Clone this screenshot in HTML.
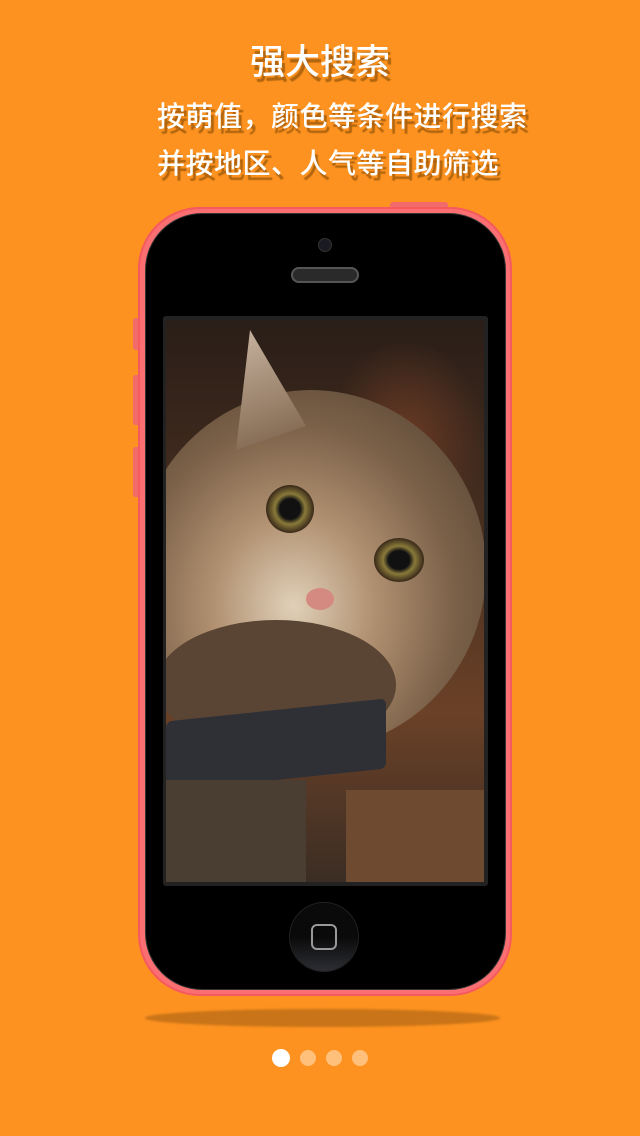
<!DOCTYPE html>
<html><head><meta charset="utf-8"><style>
*{margin:0;padding:0}
body{width:640px;height:1136px;background:#fd9220;position:relative;overflow:hidden;font-family:"Liberation Sans","Noto Sans CJK SC",sans-serif;color:#fff}
.t{position:absolute;white-space:nowrap;font-weight:500;text-shadow:3px 5px 1px rgba(150,85,10,.75)}
.abs{position:absolute}
</style></head><body>
<div class="t" style="left:0;width:640px;text-align:center;top:34px;font-size:35px;">强大搜索</div>
<div class="t" style="left:157px;top:95px;font-size:28px;letter-spacing:0.5px">按萌值，颜色等条件进行搜索</div>
<div class="t" style="left:157px;top:142px;font-size:28px;letter-spacing:0.5px">并按地区、人气等自助筛选</div>

<div class="abs" style="left:145px;top:1009px;width:355px;height:18px;border-radius:50%;background:#c97418;filter:blur(1px)"></div>
<div class="abs" style="left:390px;top:202px;width:58px;height:8px;border-radius:3px;background:#f26a6a"></div>
<div class="abs" style="left:133px;top:318px;width:8px;height:32px;border-radius:3px;background:#f26a6a"></div>
<div class="abs" style="left:133px;top:375px;width:8px;height:50px;border-radius:3px;background:#f26a6a"></div>
<div class="abs" style="left:133px;top:447px;width:8px;height:50px;border-radius:3px;background:#f26a6a"></div>
<div class="abs" style="left:138px;top:207px;width:374px;height:789px;border-radius:62px;background:#fb6f72;box-shadow:inset 0 0 0 2px #f55a5e"></div>
<div class="abs" style="left:146px;top:214px;width:359px;height:775px;border-radius:56px;background:#000;box-shadow:0 0 0 1px #333"></div>
<div class="abs" style="left:319px;top:239px;width:12px;height:12px;border-radius:50%;background:#1a1a22;box-shadow:0 0 0 1px #333"></div>
<div class="abs" style="left:291px;top:267px;width:68px;height:16px;border-radius:8px;background:#2a2a2a;box-shadow:inset 0 0 0 2px #555"></div>
<div class="abs" style="left:163px;top:316px;width:325px;height:570px;background:#222;border-radius:3px"></div>
<div class="abs" style="left:166px;top:320px;width:318px;height:562px;overflow:hidden;background:linear-gradient(180deg,#2a1e18 0%,#4a3020 40%,#6b4127 70%,#3b2d24 100%)">
 <div class="abs" style="left:160px;top:20px;width:160px;height:200px;background:radial-gradient(#6a3a24,transparent 70%)"></div>
 <div class="abs" style="left:-30px;top:70px;width:350px;height:360px;border-radius:50%;background:radial-gradient(ellipse at 45% 60%,#e0d0b8 0%,#b09070 30%,#7a6048 60%,#4a3a2c 100%)"></div>
 <div class="abs" style="left:70px;top:10px;width:70px;height:120px;background:linear-gradient(160deg,#c8b4a0,#7b6048);clip-path:polygon(20% 0,100% 80%,0 100%)"></div>
 <div class="abs" style="left:-10px;top:300px;width:240px;height:130px;border-radius:50%;background:#5a4434"></div>
 <div class="abs" style="left:100px;top:165px;width:48px;height:48px;border-radius:50%;background:radial-gradient(#111 30%,#8a7a3a 45%,#3a2a1a 70%)"></div>
 <div class="abs" style="left:208px;top:218px;width:50px;height:44px;border-radius:50%;background:radial-gradient(#111 30%,#8a7a3a 45%,#3a2a1a 70%)"></div>
 <div class="abs" style="left:140px;top:268px;width:28px;height:22px;border-radius:50%;background:#d48a80"></div>
 <div class="abs" style="left:0;top:390px;width:220px;height:70px;background:#2e3036;transform:skewY(-6deg);border-radius:6px"></div>
 <div class="abs" style="left:0;top:460px;width:140px;height:110px;background:#4a3e32"></div>
 <div class="abs" style="left:180px;top:470px;width:140px;height:92px;background:#6d4a30"></div>
</div>
<div class="abs" style="left:290px;top:903px;width:68px;height:68px;border-radius:50%;background:linear-gradient(180deg,#0a0a0a 50%,#2c2e33 100%);box-shadow:0 0 0 1px #222"></div>
<div class="abs" style="left:311px;top:924px;width:22px;height:22px;border:2px solid #999;border-radius:6px"></div>

<div class="abs" style="left:272px;top:1049px;width:18px;height:18px;border-radius:50%;background:#fff"></div>
<div class="abs" style="left:300px;top:1050px;width:16px;height:16px;border-radius:50%;background:#fec07b"></div>
<div class="abs" style="left:326px;top:1050px;width:16px;height:16px;border-radius:50%;background:#fec07b"></div>
<div class="abs" style="left:352px;top:1050px;width:16px;height:16px;border-radius:50%;background:#fec07b"></div>
</body></html>
